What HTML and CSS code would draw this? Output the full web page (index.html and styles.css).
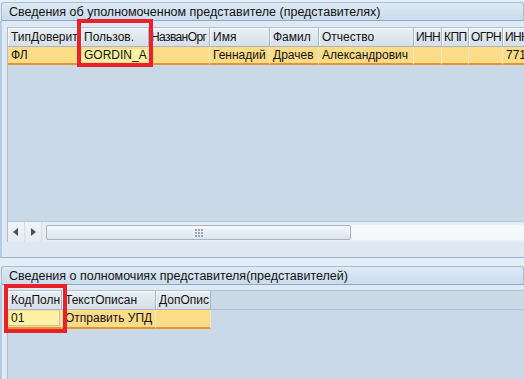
FILE: index.html
```html
<!DOCTYPE html>
<html lang="ru">
<head>
<meta charset="utf-8">
<title>Сведения</title>
<link rel="stylesheet" href="styles.css">
</head>
<body>
<div class="screen">
  <div class="top-strip"></div>
  <div class="title">Сведения об уполномоченном представителе (представителях)</div>
  <div class="panel panel1">
    <div class="grid grid1">
      <div class="hrow cols1">
        <div class="hc">ТипДоверит</div>
        <div class="hc">Пользов.</div>
        <div class="hc tight">НазванОрг</div>
        <div class="hc">Имя</div>
        <div class="hc">Фамил</div>
        <div class="hc">Отчество</div>
        <div class="hc tight">ИНН</div>
        <div class="hc tight">КПП</div>
        <div class="hc tight">ОГРН</div>
        <div class="hc tight">ИНН</div>
      </div>
      <div class="drow cols1">
        <div class="dc">ФЛ</div>
        <div class="dc"><span class="sel">GORDIN_A</span></div>
        <div class="dc"></div>
        <div class="dc">Геннадий</div>
        <div class="dc">Драчев</div>
        <div class="dc">Александрович</div>
        <div class="dc"></div>
        <div class="dc"></div>
        <div class="dc"></div>
        <div class="dc">7714</div>
      </div>
      <div class="fill"></div>
      <div class="hscroll">
        <div class="sbtn"><svg width="6" height="8" viewBox="0 0 6 8"><path d="M5 0V8L0 4Z" fill="#4a4f57"/></svg></div>
        <div class="sbtn"><svg width="6" height="8" viewBox="0 0 6 8"><path d="M1 0V8L6 4Z" fill="#4a4f57"/></svg></div>
        <div class="thumb">
          <svg width="8" height="8" viewBox="0 0 8 8" class="grip">
            <rect x="0" y="0" width="2" height="2" fill="#9aa6b3"/><rect x="3" y="0" width="2" height="2" fill="#9aa6b3"/><rect x="6" y="0" width="2" height="2" fill="#9aa6b3"/>
            <rect x="0" y="3" width="2" height="2" fill="#9aa6b3"/><rect x="3" y="3" width="2" height="2" fill="#9aa6b3"/><rect x="6" y="3" width="2" height="2" fill="#9aa6b3"/>
            <rect x="0" y="6" width="2" height="2" fill="#9aa6b3"/><rect x="3" y="6" width="2" height="2" fill="#9aa6b3"/><rect x="6" y="6" width="2" height="2" fill="#9aa6b3"/>
          </svg>
        </div>
        <div class="track"></div>
      </div>
    </div>
  </div>
  <div class="sep"></div>
  <div class="title title2">Сведения о полномочиях представителя(представителей)</div>
  <div class="panel panel2">
    <div class="grid grid2">
      <div class="hrow cols2">
        <div class="hc">КодПолн</div>
        <div class="hc">ТекстОписан</div>
        <div class="hc">ДопОпис</div>
        <div class="hc blank"></div>
      </div>
      <div class="drow cols2">
        <div class="dc"><span class="sel sel2">01</span></div>
        <div class="dc">Отправить УПД</div>
        <div class="dc"></div>
        <div class="dc blank"></div>
      </div>
    </div>
  </div>
  <div class="mark mark1"></div>
  <div class="mark mark2"></div>
</div>
</body>
</html>
```
FILE: styles.css
```css
* { box-sizing: border-box; }
html, body { margin: 0; padding: 0; }
body {
  width: 524px;
  height: 379px;
  overflow: hidden;
  background: #dfe9f3;
  font-family: "Liberation Sans", Arial, sans-serif;
  font-size: 12px;
  color: #111;
}
.screen {
  position: relative;
  display: flex;
  flex-direction: column;
  height: 379px;
}
.top-strip { height: 2px; background: #e6eef6; flex: none; }
.title {
  flex: none;
  height: 19px;
  margin-left: 1px;
  padding-left: 7px;
  line-height: 18px;
  font-size: 12.5px;
  border: 1px solid #a6bcd3;
  border-bottom-color: #8eaacb;
  border-radius: 3px 3px 0 0;
  background: linear-gradient(#dde9f5, #cbdbeb);
  white-space: nowrap;
  overflow: hidden;
}
.panel {
  flex: none;
  background: #dfe9f3;
  border-left: 2px solid #b3cbe3;
  padding-left: 5px;
}
.panel1 {
  height: 237px;
  padding-top: 6px;
  padding-bottom: 15px;
  border-bottom: 1px solid #96b2d0;
}
.sep { flex: none; height: 8px; background: #e5edf6; }
.panel2 { flex: 1; padding-top: 5px; }
.grid {
  height: 100%;
  background: #cad9e8;
  border-left: 1px solid #aebccb;
  border-top: 1px solid #b3c1cf;
  display: flex;
  flex-direction: column;
  overflow: hidden;
}
.cols1 {
  display: grid;
  grid-template-columns: 73px 68px 61px 60px 49px 95px 28px 27px 34px 60px;
}
.cols2 {
  display: grid;
  grid-template-columns: 54px 94px 55px 1fr;
}
.hrow { flex: none; height: 19px; }
.hc {
  height: 19px;
  padding-left: 3px;
  line-height: 18px;
  background: linear-gradient(#e9eff5, #d6dfe8);
  border-right: 1px solid #aab6c3;
  border-bottom: 1px solid #aab6c3;
  box-shadow: inset 1px 1px 0 #f6f9fc;
  white-space: nowrap;
  overflow: hidden;
}
.hc.tight { padding-left: 2px; letter-spacing: -0.6px; }
.hc.blank {
  background: transparent;
  box-shadow: none;
  border-right: none;
  border-bottom-color: #b3c0cd;
}
.drow { flex: none; height: 18px; }
.dc {
  height: 18px;
  padding-left: 3px;
  line-height: 16px;
  background: #fddc88;
  border-right: 1px solid #f3e6c4;
  border-bottom: 2px solid #e8932f;
  white-space: nowrap;
  overflow: hidden;
  position: relative;
}
.drow.cols2 { height: 19px; }
.cols2 .dc { height: 19px; line-height: 17px; }
.dc.blank { background: transparent; border: none; }
.sel {
  display: block;
  margin: 2px 1px 1px -2px;
  padding-left: 2px;
  height: 13px;
  line-height: 13px;
  background: #fff1a3;
}
.sel2 {
  height: 15px;
  line-height: 15px;
  margin-top: 1px;
  border-right: 1px solid #c9c2a6;
  border-bottom: 1px solid #c9c2a6;
}
.fill { flex: 1; }
.hscroll {
  flex: none;
  height: 21px;
  display: flex;
  align-items: stretch;
  background: #e6edf5;
  border-top: 1px solid #b8c6d4;
}
.sbtn {
  width: 17px;
  flex: none;
  display: flex;
  align-items: center;
  justify-content: center;
  background: linear-gradient(#f1f5f9, #e4ebf2);
  border-right: 1px solid #d5dee7;
}
.thumb {
  flex: none;
  width: 305px;
  margin: 3px 0 2px 4px;
  border: 1px solid #a9b5c2;
  border-radius: 2px;
  background: linear-gradient(#f6f9fb, #dbe4ec);
  display: flex;
  align-items: center;
  justify-content: center;
}
.track { flex: 1; margin: 3px 0 2px 0; background: #f5f8fa; }
.mark {
  position: absolute;
  border: 4px solid #e8222b;
  pointer-events: none;
}
.mark1 { left: 77px; top: 19px; width: 76px; height: 48px; }
.mark2 { left: 4px; top: 284px; width: 63px; height: 49px; }
```
